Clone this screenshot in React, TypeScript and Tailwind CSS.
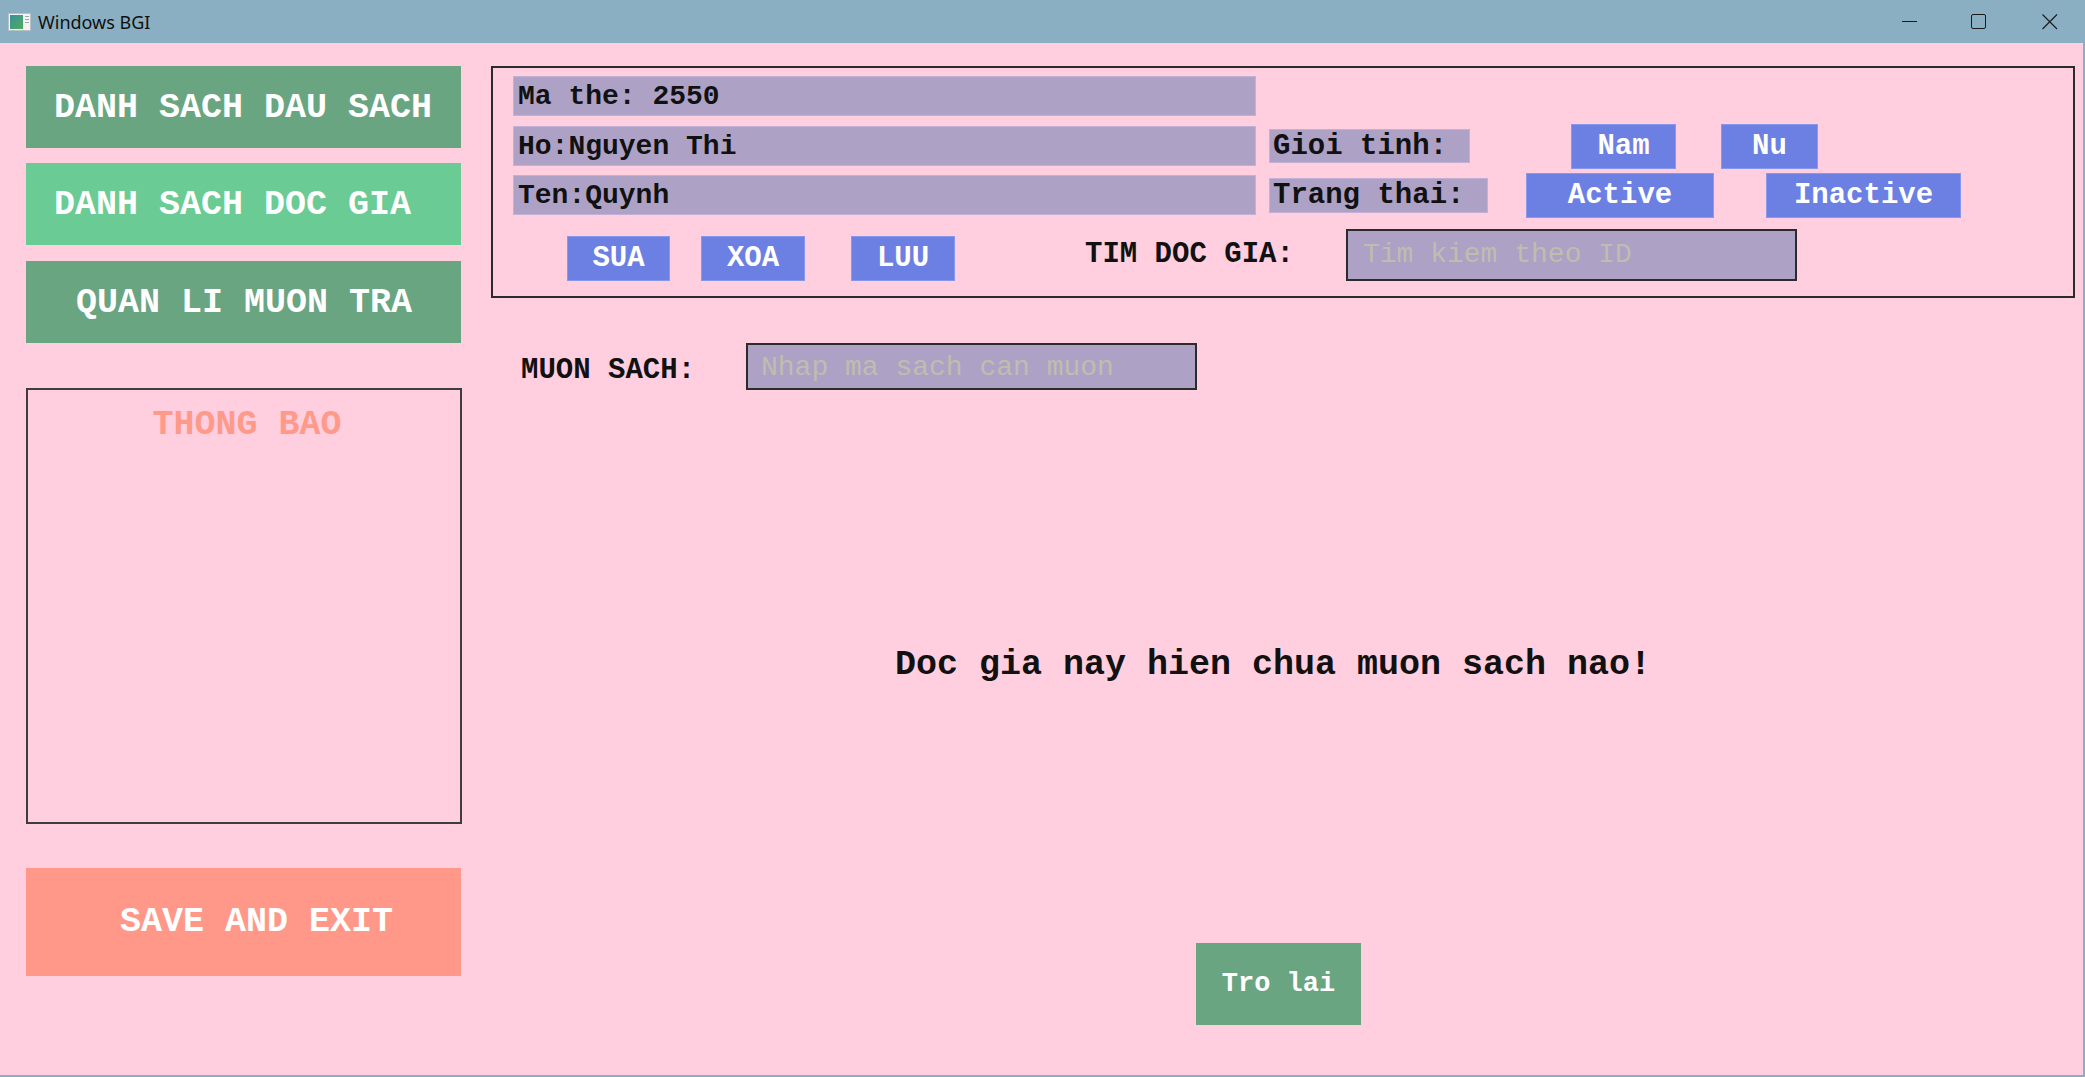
import React from 'react';

const Field = ({ text }: { text: string }) => (
  <div className="w-[743px] h-[40px] bg-[#ada2c6] border border-[#c2b1d6] flex items-center pl-[4px] pt-[2px] text-[28px] font-bold text-[#111] leading-none whitespace-pre">
    {text}
  </div>
);

const BlueBtn = ({ label, className }: { label: string; className: string }) => (
  <div
    className={`h-[45px] bg-[#6c80e3] border border-[#8797ec] flex items-center justify-center text-white text-[29px] font-bold leading-none ${className}`}
  >
    {label}
  </div>
);

const TitleBar = () => (
  <div className="h-[43px] flex items-center bg-[#8aafc2] shrink-0">
    <svg className="ml-[8px]" width="23" height="18" viewBox="0 0 23 18">
      <rect x="0.5" y="0.5" width="22" height="17" fill="#f4f4f4" stroke="#b9c0c6" />
      <defs>
        <linearGradient id="g" x1="0" y1="0" x2="1" y2="1">
          <stop offset="0" stopColor="#3a8f9a" />
          <stop offset="1" stopColor="#4fae5c" />
        </linearGradient>
      </defs>
      <rect x="2" y="2" width="13" height="14" fill="url(#g)" />
      <rect x="17" y="3" width="4" height="1" fill="#9aa" />
      <rect x="17" y="6" width="4" height="1" fill="#9aa" />
      <rect x="17" y="9" width="4" height="1" fill="#9aa" />
    </svg>
    <span className="ml-[7px] text-[18px] text-[#111] font-['Noto_Sans',sans-serif] leading-none">Windows BGI</span>
    <div className="ml-auto mr-[27px] flex items-center">
      <svg width="16" height="16" viewBox="0 0 16 16">
        <line x1="0" y1="7.5" x2="15" y2="7.5" stroke="#1a1a1a" strokeWidth="1" />
      </svg>
      <svg className="ml-[53px]" width="16" height="16" viewBox="0 0 16 16">
        <rect x="0.5" y="0.5" width="14" height="14" rx="1.5" fill="none" stroke="#1a1a1a" strokeWidth="1" />
      </svg>
      <svg className="ml-[55px]" width="16" height="16" viewBox="0 0 16 16">
        <path d="M0.5 0.5 L15 15 M15 0.5 L0.5 15" stroke="#1a1a1a" strokeWidth="1.1" />
      </svg>
    </div>
  </div>
);

export default function App() {
  return (
    <div className="w-[2085px] h-[1077px] flex flex-col bg-[#8aafc2] font-['Liberation_Mono',monospace] overflow-hidden">
      <TitleBar />
      <div className="flex-1 flex bg-[#ffcfdf] mr-[2px] mb-[2px]">
        {/* left menu */}
        <aside className="w-[491px] shrink-0 pl-[26px] pt-[23px] flex flex-col">
          <div className="w-[435px] h-[82px] bg-[#6aa582] flex items-center pl-[28px] pt-[2px] text-white text-[35px] font-bold leading-none whitespace-pre">
            DANH SACH DAU SACH
          </div>
          <div className="mt-[15px] w-[435px] h-[82px] bg-[#6bcb94] flex items-center pl-[28px] pt-[2px] text-white text-[35px] font-bold leading-none whitespace-pre">
            DANH SACH DOC GIA
          </div>
          <div className="mt-[16px] w-[435px] h-[82px] bg-[#6aa582] flex items-center pl-[50px] pt-[2px] text-white text-[35px] font-bold leading-none whitespace-pre">
            QUAN LI MUON TRA
          </div>
          <div className="mt-[45px] w-[436px] h-[436px] border-2 border-[#3d3d3d] flex flex-col items-center pt-[18px]">
            <span className="text-[35px] text-[#ff9a8a] font-bold leading-none pl-[6px]">THONG BAO</span>
          </div>
          <div className="mt-[44px] w-[435px] h-[108px] bg-[#ff9888] flex items-center pl-[94px] text-white text-[35px] font-bold leading-none whitespace-pre">
            SAVE AND EXIT
          </div>
        </aside>

        {/* main */}
        <main className="flex-1 pt-[23px] flex flex-col">
          <div className="w-[1584px] h-[232px] border-2 border-[#2b2b2b] pl-[20px] pt-[8px] flex flex-col">
            <div className="h-[40px] flex items-center">
              <Field text="Ma the: 2550" />
            </div>
            <div className="mt-[10px] h-[40px] flex items-center">
              <Field text="Ho:Nguyen Thi" />
              <div className="ml-[13px] w-[201px] h-[34px] bg-[#ada2c6] border border-[#c2b1d6] flex items-center pl-[3px] text-[29px] font-bold text-[#111] leading-none whitespace-pre">
                Gioi tinh:
              </div>
              <BlueBtn label="Nam" className="ml-[101px] w-[105px]" />
              <BlueBtn label="Nu" className="ml-[45px] w-[97px]" />
            </div>
            <div className="mt-[9px] h-[40px] flex items-center">
              <Field text="Ten:Quynh" />
              <div className="ml-[13px] w-[219px] h-[35px] bg-[#ada2c6] border border-[#c2b1d6] flex items-center pl-[3px] text-[29px] font-bold text-[#111] leading-none whitespace-pre">
                Trang thai:
              </div>
              <BlueBtn label="Active" className="ml-[38px] w-[188px]" />
              <BlueBtn label="Inactive" className="ml-[52px] w-[195px]" />
            </div>
            <div className="mt-[14px] h-[52px] flex items-end">
              <BlueBtn label="SUA" className="ml-[54px] w-[103px]" />
              <BlueBtn label="XOA" className="ml-[31px] w-[104px]" />
              <BlueBtn label="LUU" className="ml-[46px] w-[104px]" />
              <div className="ml-[130px] mb-[4px] w-[261px] h-[45px] flex items-center text-[29px] font-bold text-[#111] leading-none whitespace-pre">
                TIM DOC GIA:
              </div>
              <div className="w-[451px] h-[52px] border-2 border-[#2b2b2b] bg-[#ada2c6] flex items-center pl-[15px] text-[28px] text-[#c0bdae] leading-none whitespace-pre">
                Tim kiem theo ID
              </div>
            </div>
          </div>

          <div className="mt-[45px] h-[47px] flex items-center">
            <div className="w-[255px] pl-[30px] pt-[8px] text-[29px] font-bold text-[#111] leading-none whitespace-pre">
              MUON SACH:
            </div>
            <div className="w-[451px] h-[47px] border-2 border-[#2b2b2b] bg-[#ada2c6] flex items-center pl-[13px] pt-[3px] text-[28px] text-[#c0bdae] leading-none whitespace-pre">
              Nhap ma sach can muon
            </div>
          </div>

          <div className="mt-[255px] h-[40px] pl-[404px] flex items-center text-[35px] font-bold text-[#111] leading-none whitespace-pre">
            Doc gia nay hien chua muon sach nao!
          </div>

          <div className="mt-[258px] ml-[705px] w-[165px] h-[82px] bg-[#6aa582] flex items-center justify-center text-white text-[27px] font-bold leading-none whitespace-pre">
            Tro lai
          </div>
        </main>
      </div>
    </div>
  );
}
